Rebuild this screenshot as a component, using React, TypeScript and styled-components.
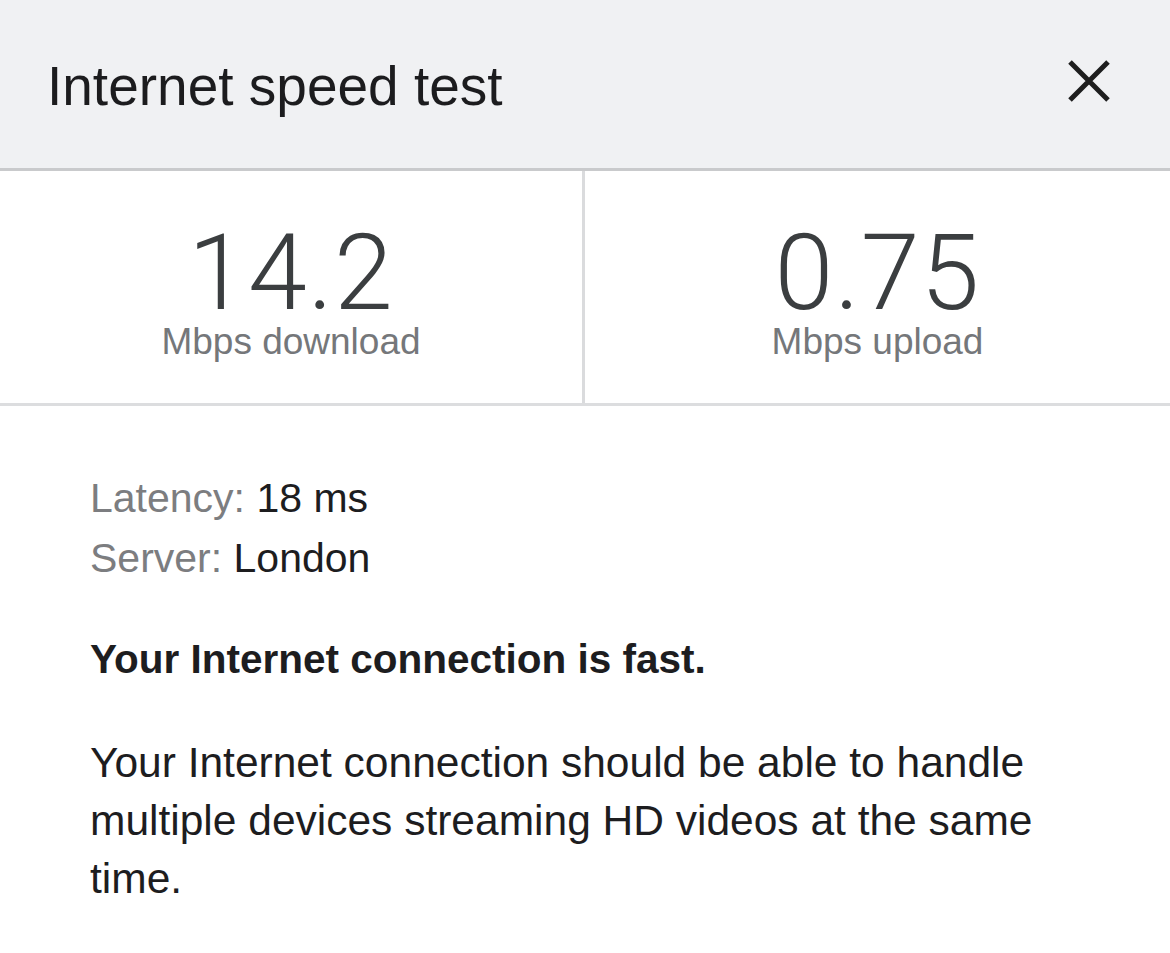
import React from "react";
import styled, { createGlobalStyle } from "styled-components";

const GlobalStyle = createGlobalStyle`
  html, body {
    margin: 0;
    padding: 0;
    background: #ffffff;
  }
  body {
    font-family: "Liberation Sans", Arial, sans-serif;
    -webkit-font-smoothing: antialiased;
  }
`;

const Page = styled.div`
  width: 1170px;
  min-height: 953px;
  background: #ffffff;
  display: flex;
  flex-direction: column;
`;

const Header = styled.header`
  height: 168px;
  background: #f0f1f3;
  border-bottom: 3px solid #c9cacc;
  display: flex;
  align-items: center;
  justify-content: space-between;
  padding: 0 60px 0 47px;
`;

const Title = styled.h1`
  margin: 0;
  padding-top: 5px;
  font-family: "Liberation Sans", Arial, sans-serif;
  font-weight: 400;
  font-size: 55px;
  line-height: 1;
  color: #1c1c1e;
`;

const CloseButton = styled.button`
  width: 42px;
  height: 42px;
  margin-bottom: 6px;
  padding: 0;
  border: none;
  background: transparent;
  display: flex;
  align-items: center;
  justify-content: center;
  cursor: pointer;
`;

const Stats = styled.section`
  display: grid;
  grid-template-columns: 1fr 1fr;
  height: 232px;
  border-bottom: 3px solid #dcdddf;
`;

const StatCell = styled.div<{ $divider?: boolean }>`
  display: flex;
  flex-direction: column;
  align-items: center;
  padding-top: 52px;
  border-right: ${(p) => (p.$divider ? "3px solid #dadbdd" : "none")};
`;

const StatValue = styled.div`
  font-family: Roboto, "Liberation Sans", sans-serif;
  font-weight: 300;
  font-size: 106px;
  line-height: 100px;
  letter-spacing: 1px;
  color: #3b3e40;
`;

const StatLabel = styled.div`
  font-family: "Liberation Sans", Arial, sans-serif;
  font-size: 37px;
  line-height: 37px;
  color: #75777a;
`;

const Details = styled.section`
  padding: 62px 90px 0 90px;
  display: flex;
  flex-direction: column;
`;

const InfoLine = styled.div`
  font-family: "Liberation Sans", Arial, sans-serif;
  font-size: 41px;
  line-height: 60px;
  color: #1d1d1f;
`;

const InfoKey = styled.span`
  color: #7c7d80;
`;

const Verdict = styled.p`
  margin: 41px 0 0 0;
  font-family: "Liberation Sans", Arial, sans-serif;
  font-weight: 700;
  font-size: 40.5px;
  line-height: 60px;
  color: #1d1d1f;
`;

const Description = styled.p`
  margin: 45px 0 0 0;
  font-family: "Liberation Sans", Arial, sans-serif;
  font-size: 42.5px;
  line-height: 58px;
  color: #1d1d1f;
`;

const stats = [
  { value: "14.2", label: "Mbps download" },
  { value: "0.75", label: "Mbps upload" },
];

export default function App() {
  return (
    <Page>
      <GlobalStyle />
      <Header>
        <Title>Internet speed test</Title>
        <CloseButton aria-label="Close">
          <svg width="42" height="42" viewBox="0 0 42 42">
            <path d="M2 2 L40 40 M40 2 L2 40" stroke="#1e1e1e" strokeWidth="5" fill="none" />
          </svg>
        </CloseButton>
      </Header>
      <Stats>
        {stats.map((s, i) => (
          <StatCell key={s.label} $divider={i === 0}>
            <StatValue>{s.value}</StatValue>
            <StatLabel>{s.label}</StatLabel>
          </StatCell>
        ))}
      </Stats>
      <Details>
        <InfoLine>
          <InfoKey>Latency:</InfoKey> 18 ms
        </InfoLine>
        <InfoLine>
          <InfoKey>Server:</InfoKey> London
        </InfoLine>
        <Verdict>Your Internet connection is fast.</Verdict>
        <Description>
          Your Internet connection should be able to handle multiple devices streaming HD videos at the same time.
        </Description>
      </Details>
    </Page>
  );
}
